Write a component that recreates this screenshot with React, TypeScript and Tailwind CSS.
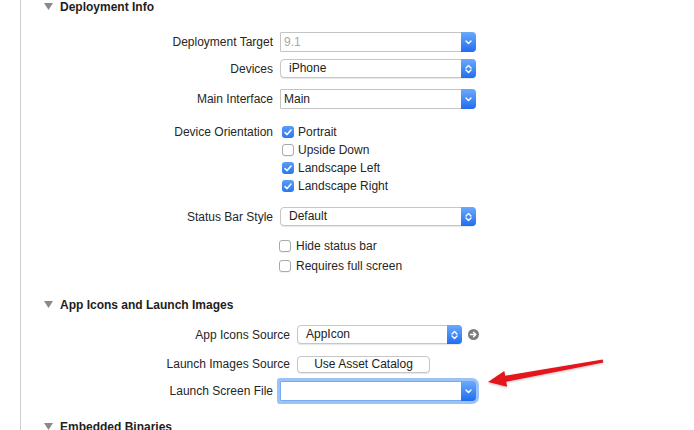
import React from 'react';

const Triangle = () => (
  <svg width="9" height="7" viewBox="0 0 9 7" className="shrink-0">
    <path d="M0 0 H9 L4.5 7 Z" fill="#8a8a8a" />
  </svg>
);

const SectionHeader = ({ title, className = '' }: { title: string; className?: string }) => (
  <div className={`flex items-center h-[13px] pl-[23px] gap-[7px] ${className}`}>
    <Triangle />
    <span className="font-bold text-[12px] text-[#1e1e1e]">{title}</span>
  </div>
);

const Separator = ({ className = '' }: { className?: string }) => (
  <div className={`ml-[19px] h-px bg-[#d9d9d9] ${className}`} />
);

const Chevron = ({ updown }: { updown?: boolean }) =>
  updown ? (
    <svg width="7" height="10" viewBox="0 0 7 10">
      <path d="M1 4 L3.5 1.5 L6 4 M1 6 L3.5 8.5 L6 6" stroke="white" strokeWidth="1.4" fill="none" strokeLinecap="round" strokeLinejoin="round" />
    </svg>
  ) : (
    <svg width="7" height="5" viewBox="0 0 7 5">
      <path d="M1 1 L3.5 3.5 L6 1" stroke="white" strokeWidth="1.4" fill="none" strokeLinecap="round" strokeLinejoin="round" />
    </svg>
  );

const BlueButton = ({ updown }: { updown?: boolean }) => (
  <div className="-my-px -mr-px w-[15px] shrink-0 rounded-r-[4px] bg-linear-to-b from-[#6aa9fb] to-[#1f6df0] flex items-center justify-center">
    <Chevron updown={updown} />
  </div>
);

const Popup = ({ value, width = 'w-[196px]' }: { value: string; width?: string }) => (
  <div className={`flex h-[19px] ${width} rounded-[4px] border border-[#c6c6c6] bg-white shadow-[0_1px_1px_rgba(0,0,0,0.1)]`}>
    <span className="flex-1 pl-[8px] leading-[17px] text-[#222]">{value}</span>
    <BlueButton updown />
  </div>
);

const Combo = ({ value, disabled, focused }: { value: string; disabled?: boolean; focused?: boolean }) => (
  <div
    className={`flex h-[20px] w-[196px] rounded-l-[1px] rounded-r-[4px] border bg-white ${
      focused ? 'border-[#7aaaf0] ring-[3px] ring-[#9cc3f6]' : 'border-[#c4c4c4]'
    }`}
  >
    <span className={`flex-1 pl-[3px] leading-[18px] ${disabled ? 'text-[#a8a8a8]' : 'text-[#222]'}`}>{value}</span>
    <BlueButton />
  </div>
);

const Checkbox = ({ checked }: { checked?: boolean }) =>
  checked ? (
    <div className="w-[12px] h-[12px] rounded-[3px] bg-linear-to-b from-[#5b9cf8] to-[#2a77f2] flex items-center justify-center shrink-0">
      <svg width="8" height="7" viewBox="0 0 8 7">
        <path d="M1 3.6 L3.1 5.6 L7 1" stroke="white" strokeWidth="1.5" fill="none" strokeLinecap="round" strokeLinejoin="round" />
      </svg>
    </div>
  ) : (
    <div className="w-[12px] h-[12px] rounded-[3px] border border-[#a9a9a9] bg-white shadow-[0_1px_0_rgba(0,0,0,0.05)] shrink-0" />
  );

const CheckRow = ({ label, checked, className = '' }: { label: string; checked?: boolean; className?: string }) => (
  <div className={`flex items-center h-[18px] gap-[4px] ${className}`}>
    <Checkbox checked={checked} />
    <span>{label}</span>
  </div>
);

const Row = ({
  label,
  labelWidth = 'w-[252px]',
  children,
  className = '',
}: {
  label: string;
  labelWidth?: string;
  children: React.ReactNode;
  className?: string;
}) => (
  <div className={`flex items-center h-[20px] ${className}`}>
    <span className={`${labelWidth} text-right shrink-0`}>{label}</span>
    <div className="ml-[7px] flex items-center">{children}</div>
  </div>
);

const GoArrow = () => (
  <svg width="11" height="11" viewBox="0 0 11 11" className="ml-[6px]">
    <circle cx="5.5" cy="5.5" r="5.5" fill="#7b7b7b" />
    <path d="M2.6 5.5 H7.6 M5.6 3.3 L7.8 5.5 L5.6 7.7" stroke="white" strokeWidth="1.5" fill="none" strokeLinecap="round" strokeLinejoin="round" />
  </svg>
);

export default function App() {
  return (
    <div
      className="relative w-[694px] h-[430px] overflow-hidden bg-white text-[12px] text-[#262626]"
      style={{ fontFamily: '"Liberation Sans", Arial, sans-serif' }}
    >
      <div className="ml-[20px] h-full border-l border-[#cdcdcd] flex flex-col">
        <SectionHeader title="Deployment Info" />

        <Row label="Deployment Target" className="mt-[19px]">
          <Combo value="9.1" disabled />
        </Row>
        <Row label="Devices" className="mt-[7px]">
          <Popup value="iPhone" />
        </Row>
        <Row label="Main Interface" className="mt-[11px]">
          <Combo value="Main" />
        </Row>

        <div className="flex mt-[14px]">
          <span className="w-[252px] text-right shrink-0 leading-[18px]">Device Orientation</span>
          <div className="ml-[9px] flex flex-col">
            <CheckRow label="Portrait" checked />
            <CheckRow label="Upside Down" />
            <CheckRow label="Landscape Left" checked />
            <CheckRow label="Landscape Right" checked />
          </div>
        </div>

        <Row label="Status Bar Style" className="mt-[12px]">
          <Popup value="Default" />
        </Row>

        <div className="ml-[258px] flex flex-col mt-[11px]">
          <CheckRow label="Hide status bar" className="gap-[5px]" />
          <CheckRow label="Requires full screen" className="gap-[5px] mt-[2px]" />
        </div>

        <Separator className="mt-[9px]" />

        <SectionHeader title="App Icons and Launch Images" className="mt-[14px]" />

        <Row label="App Icons Source" labelWidth="w-[269px]" className="mt-[14px]">
          <Popup value="AppIcon" width="w-[165px]" />
          <GoArrow />
        </Row>
        <Row label="Launch Images Source" labelWidth="w-[269px]" className="mt-[11px]">
          <button className="h-[17px] w-[133px] rounded-[4px] border border-[#c6c6c6] bg-white shadow-[0_1px_1px_rgba(0,0,0,0.1)] text-[12px] leading-[15px] text-[#222]">
            Use Asset Catalog
          </button>
        </Row>
        <Row label="Launch Screen File" className="mt-[8px]">
          <Combo value="" focused />
        </Row>

        <Separator className="mt-[9px]" />

        <SectionHeader title="Embedded Binaries" className="mt-[10px]" />
      </div>

      <svg className="absolute inset-0 pointer-events-none" width="694" height="430" viewBox="0 0 694 430">
        <defs>
          <filter id="sh" x="-10%" y="-50%" width="120%" height="200%">
            <feDropShadow dx="0" dy="1" stdDeviation="1" floodColor="#000" floodOpacity="0.25" />
          </filter>
        </defs>
        <polygon
          filter="url(#sh)"
          fill="#e3141b"
          points="602.7,359.5 505.2,375.8 504.3,370.9 488,382 507.1,386.7 506.2,381.8 603.3,362.5"
        />
      </svg>
    </div>
  );
}
